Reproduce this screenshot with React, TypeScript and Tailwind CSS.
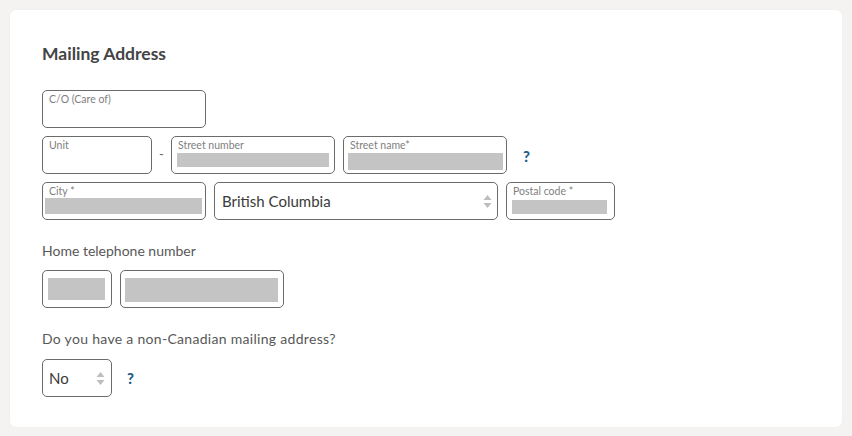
import React from "react";

const font = { fontFamily: "Lato, 'Open Sans', sans-serif" };

function Arrows() {
  return (
    <svg width="9" height="15" viewBox="0 0 9 15" className="shrink-0">
      <path d="M4.5 1 L8.5 6 H0.5 Z" fill="#bdbdbd" />
      <path d="M4.5 14 L8.5 9 H0.5 Z" fill="#bdbdbd" />
    </svg>
  );
}

function LabeledBox({ label, w, bar, barClass }: { label: string; w: string; bar?: boolean; barClass?: string }) {
  return (
    <div className={`relative h-[38px] ${w} rounded-[5px] border border-[#6b6b6b] bg-white`}>
      <div className="absolute left-[6px] top-[2px] text-[10.5px] leading-[13px] text-[#808080]">{label}</div>
      {bar && <div className={`absolute bg-[#c4c4c4] ${barClass}`} />}
    </div>
  );
}

function Help() {
  return <span className="text-[15px] font-black text-[#245d8a] leading-none">?</span>;
}

export default function App() {
  return (
    <div className="min-h-[436px] w-[852px] bg-[#f4f3f1] p-[10px]" style={font}>
      <div className="h-[417px] w-[832px] rounded-[6px] bg-white pl-[32px] pt-[32px] shadow-[0_0_2px_rgba(0,0,0,0.04)]">
        <h2 className="text-[17.5px] font-bold leading-[24px] text-[#444]">Mailing Address</h2>

        <div className="mt-[24px] flex flex-col gap-[8px]">
          <LabeledBox label="C/O (Care of)" w="w-[164px]" />

          <div className="flex items-center">
            <LabeledBox label="Unit" w="w-[110px]" />
            <div className="w-[19px] text-center text-[13px] text-[#666]">-</div>
            <LabeledBox label="Street number" w="w-[164px]" bar barClass="left-[5px] right-[5px] top-[16px] h-[14px]" />
            <div className="w-[8px]" />
            <LabeledBox label="Street name*" w="w-[164px]" bar barClass="left-[4px] right-[3px] top-[16px] h-[17px]" />
            <div className="ml-[16px] mt-[1px]"><Help /></div>
          </div>

          <div className="flex items-center gap-[8px]">
            <LabeledBox label="City *" w="w-[164px]" bar barClass="left-[2px] right-[3px] top-[15px] h-[16px]" />
            <div className="flex h-[38px] w-[284px] items-center justify-between rounded-[5px] border border-[#6b6b6b] bg-white pl-[7px] pr-[5px]">
              <span className="text-[15px] text-[#3a3a3a]">British Columbia</span>
              <Arrows />
            </div>
            <LabeledBox label="Postal code *" w="w-[109px]" bar barClass="left-[5px] right-[7px] top-[17px] h-[14px]" />
          </div>
        </div>

        <div className="mt-[21px] text-[14px] leading-[20px] text-[#585858]">Home telephone number</div>
        <div className="mt-[9px] flex gap-[8px]">
          <div className="relative h-[38px] w-[70px] rounded-[5px] border border-[#6b6b6b] bg-white">
            <div className="absolute left-[5px] right-[6px] top-[7px] h-[22px] bg-[#c4c4c4]" />
          </div>
          <div className="relative h-[38px] w-[164px] rounded-[5px] border border-[#6b6b6b] bg-white">
            <div className="absolute left-[4px] right-[5px] top-[7px] h-[24px] bg-[#c4c4c4]" />
          </div>
        </div>

        <div className="mt-[21px] text-[14px] leading-[20px] tracking-[0.3px] text-[#585858]">Do you have a non-Canadian mailing address?</div>
        <div className="mt-[10px] flex items-center">
          <div className="flex h-[38px] w-[70px] items-center justify-between rounded-[5px] border border-[#6b6b6b] bg-white pl-[6px] pr-[6px]">
            <span className="text-[15px] text-[#3a3a3a]">No</span>
            <Arrows />
          </div>
          <div className="ml-[15px]"><Help /></div>
        </div>
      </div>
    </div>
  );
}
